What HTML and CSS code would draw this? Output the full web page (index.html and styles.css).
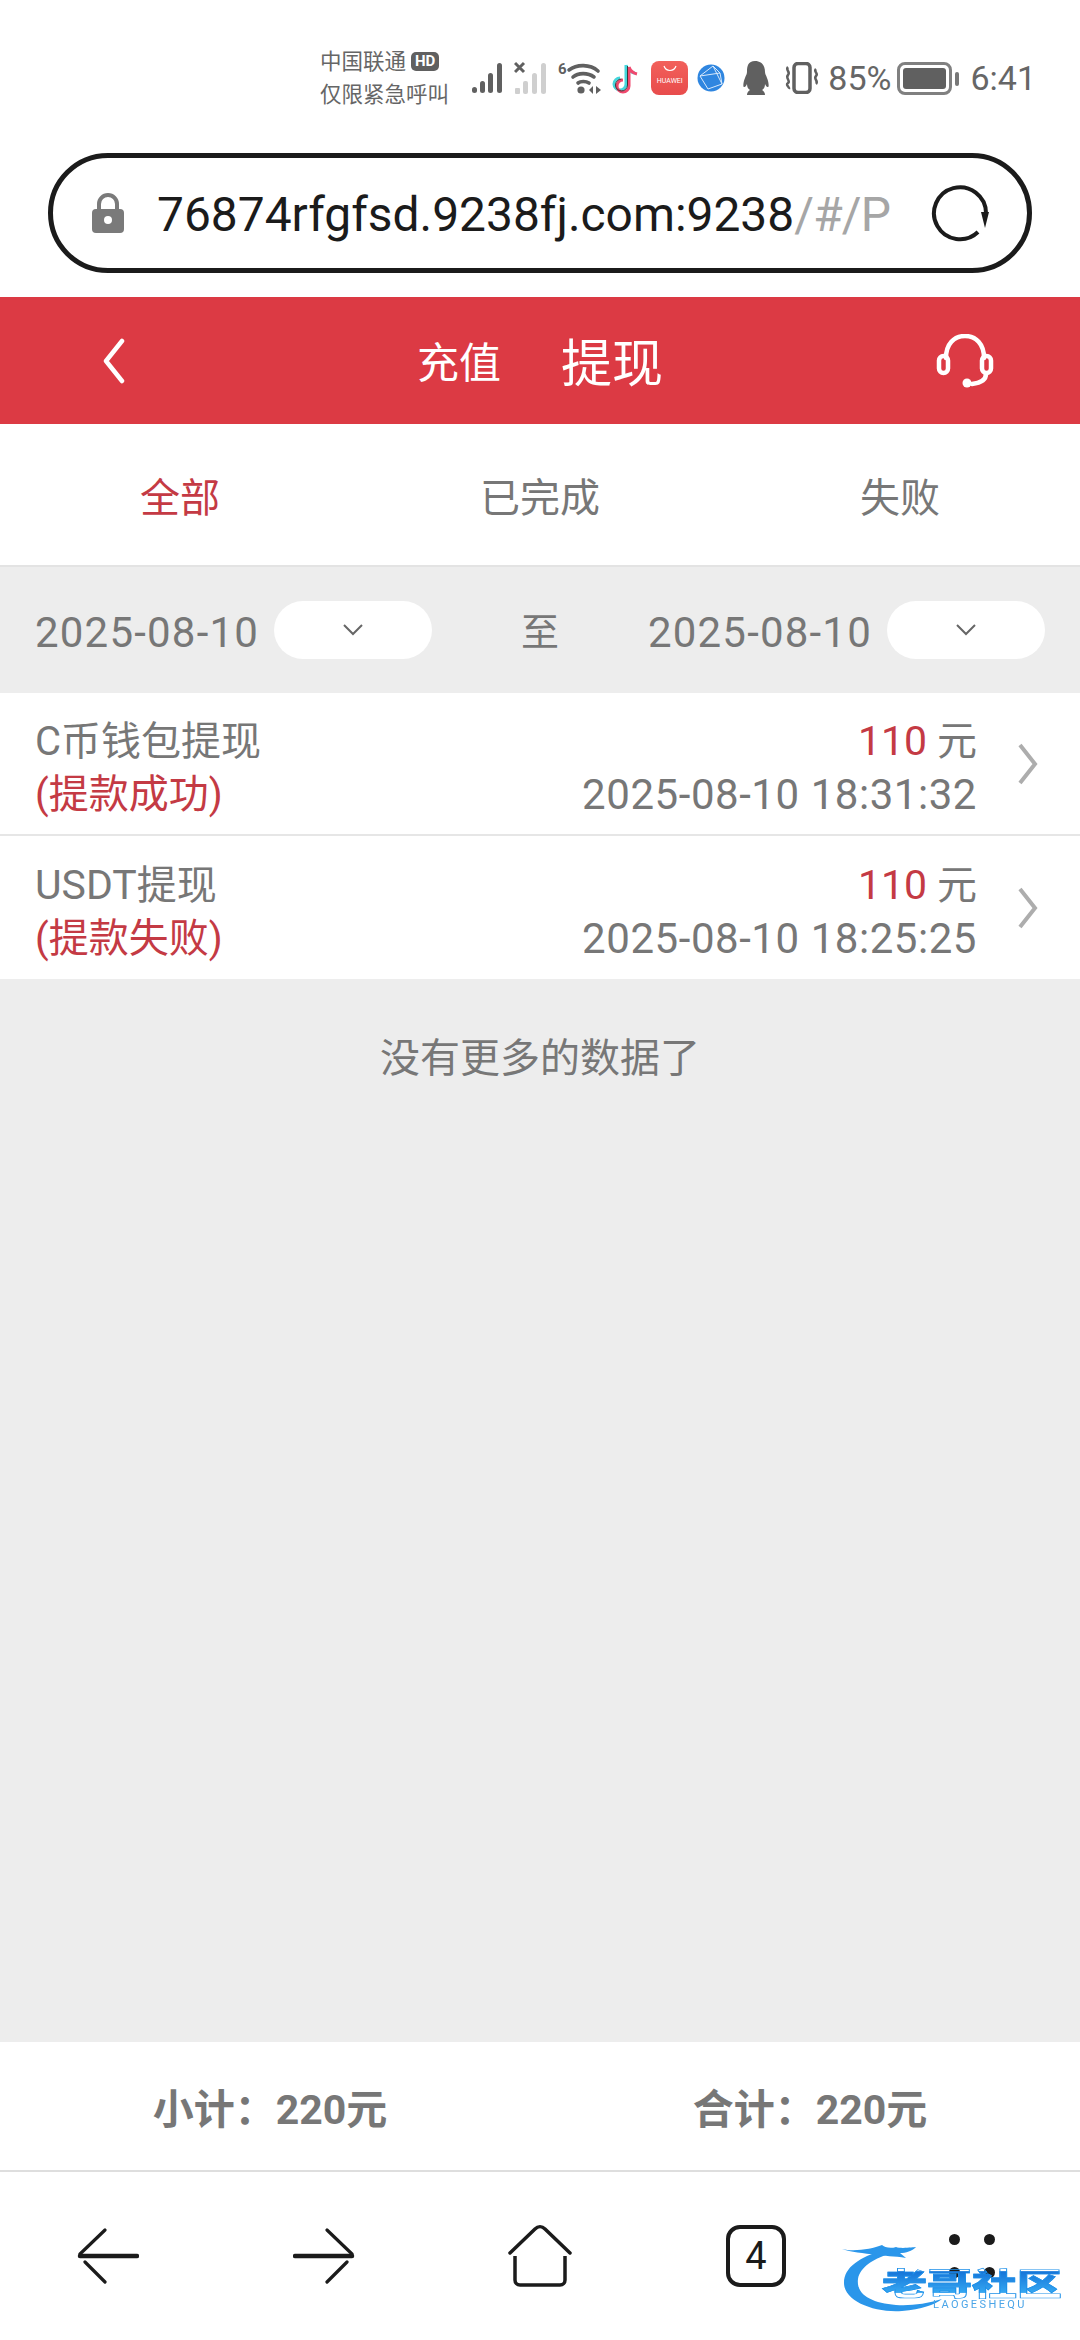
FILE: index.html
```html
<!DOCTYPE html>
<html lang="zh">
<head>
<meta charset="utf-8">
<title>提现</title>
<link rel="stylesheet" href="styles.css">
</head>
<body>
<div class="page">
  <div class="status">
    <div class="carrier">
      <div class="carrier-line"><span>中国联通</span><span class="hd">HD</span></div>
      <div class="carrier-line">仅限紧急呼叫</div>
    </div>
    <div class="status-icons">
      <svg class="si" width="34" height="32" viewBox="0 0 34 32"><g fill="#606060"><rect x="0" y="25" width="5" height="6" rx="2.5"/><rect x="8" y="19" width="5" height="12" rx="2.5"/><rect x="16" y="11" width="5" height="20" rx="2.5"/><rect x="25" y="1" width="5" height="30" rx="2.5"/></g></svg>
      <svg class="si" width="34" height="34" viewBox="0 0 34 34"><path d="M1 2l9 9M10 2l-9 9" stroke="#606060" stroke-width="3" fill="none"/><g fill="#cfcfcf"><rect x="1" y="27" width="5" height="6" rx="1"/><rect x="9" y="20" width="5" height="13" rx="2"/><rect x="18" y="12" width="5" height="21" rx="2.5"/><rect x="27" y="2" width="5" height="31" rx="2.5"/></g></svg>
      <svg class="si wifi" width="46" height="34" viewBox="0 0 46 34"><text x="0" y="13" class="six">6</text><g fill="none" stroke="#606060" stroke-width="3.600" stroke-linecap="round"><path d="M11 9c8-6 21-6 29 1"/><path d="M15 16c5-4.500 15-4.500 21 0"/><path d="M20 22c2.500-2 8-2 11 0"/></g><circle cx="23" cy="29" r="3.600" fill="#606060"/><path d="M35 25l-4 4 4 4zM38 25l5 4-5 4z" fill="#606060"/></svg>
      <svg class="si" width="28" height="32" viewBox="0 0 28 32"><g fill="none"><path d="M14 3v19a6 6 0 1 1-6-6M14 3c1 4 5 8 9 8" stroke="#44d6dc" stroke-width="3"/><path d="M17 5v19a6 6 0 1 1-6-6M17 5c1 3 4 6 8 7" stroke="#f0486e" stroke-width="3"/><path d="M15.500 4v19a6 6 0 1 1-6-6" stroke="#3a3a3a" stroke-width="1"/></g></svg>
      <div class="huawei"><svg width="14" height="7" viewBox="0 0 14 7"><path d="M1 1c2 6 10 6 12 0" fill="none" stroke="#fff" stroke-width="1.200"/></svg><span class="huawei-text">HUAWEI</span></div>
      <svg class="si" width="28" height="28" viewBox="0 0 28 28"><circle cx="14" cy="14" r="13.500" fill="#2f86e0"/><path d="M16 2L3 12l8 13 14-5zM3 12l20-3 2 11M16 2l7 7" fill="none" stroke="#d8e9fb" stroke-width="1"/></svg>
      <svg class="si qq" width="30" height="34" viewBox="0 0 30 34"><path d="M15 0c7 0 10 5 10 11 0 2 1 3 2 6 2 5 2 9 1 9-1 .5-2-1-3-3 0 3-1 5-3 6 2 1 3 3 3 5H7c0-2 1-4 3-5-2-1-3-3-3-6-1 2-2 3.500-3 3-1 0-1-4 1-9 1-3 2-4 2-6C7 5 8 0 15 0z" fill="#606060"/></svg>
      <svg class="si" width="36" height="32" viewBox="0 0 36 32"><rect x="10" y="1.500" width="16" height="29" rx="4" fill="none" stroke="#606060" stroke-width="3.500"/><g fill="none" stroke="#606060" stroke-width="2.500"><path d="M4 5c-3 3 3 5 0 8s3 6 0 8 2 4 1 6"/><path d="M32 7c-3 3 3 4 0 7s3 5 0 8"/></g></svg>
      <span class="percent">85%</span>
      <div class="battery"><div class="battery-body"><div class="battery-fill"></div></div><div class="battery-tip"></div></div>
      <span class="clock">6:41</span>
    </div>
  </div>

  <div class="url-wrap">
    <div class="url">
      <svg class="lock" width="32" height="40" viewBox="0 0 32 40"><path d="M7 18v-7a9 9 0 0 1 18 0v7" fill="none" stroke="#7a7a7a" stroke-width="4"/><rect x="0" y="16" width="32" height="24" rx="4" fill="#7a7a7a"/><circle cx="16" cy="27" r="4" fill="#fff"/></svg>
      <div class="url-text">76874rfgfsd.9238fj.com:9238<span class="url-dim">/#/P</span></div>
      <svg class="reload" width="58" height="60" viewBox="0 0 58 60"><path d="M47 49A26 26 0 1 1 55 30" fill="none" stroke="#1b1b1b" stroke-width="4"/><path d="M50 29h8l-4 16z" fill="#1b1b1b"/></svg>
    </div>
  </div>

  <header class="bar">
    <svg class="back" width="24" height="46" viewBox="0 0 24 46"><path d="M20 3L4 23l16 20" fill="none" stroke="#fff" stroke-width="4.500" stroke-linecap="round" stroke-linejoin="round"/></svg>
    <div class="bar-title"><span class="bar-sub">充值</span><span class="bar-main">提现</span></div>
    <svg class="headset" width="58" height="54" viewBox="0 0 58 54"><g fill="none" stroke="#fff" stroke-width="4.500" stroke-linecap="round"><path d="M10 24C10 10 18 2 29 2s19 8 19 22"/><rect x="3" y="22" width="9" height="17" rx="4.500"/><rect x="46" y="22" width="9" height="17" rx="4.500"/><path d="M50 40c0 6-6 9-14 10"/></g><circle cx="31" cy="49" r="4.500" fill="#fff"/></svg>
  </header>

  <nav class="tabs">
    <div class="tab tab-on">全部</div>
    <div class="tab">已完成</div>
    <div class="tab">失败</div>
  </nav>

  <div class="filter">
    <div class="date-group">
      <span class="date">2025-08-10</span>
      <div class="pill"><svg width="20" height="12" viewBox="0 0 20 12"><path d="M1 1l9 9 9-9" fill="none" stroke="#666" stroke-width="2"/></svg></div>
    </div>
    <span class="to">至</span>
    <div class="date-group">
      <span class="date">2025-08-10</span>
      <div class="pill"><svg width="20" height="12" viewBox="0 0 20 12"><path d="M1 1l9 9 9-9" fill="none" stroke="#666" stroke-width="2"/></svg></div>
    </div>
  </div>

  <div class="list">
    <div class="row">
      <div class="row-left"><div class="row-line">C币钱包提现</div><div class="row-line red">(提款成功)</div></div>
      <div class="row-right"><div class="row-line"><span class="red amount">110</span> 元</div><div class="row-line num">2025-08-10 18:31:32</div></div>
      <svg class="chev" width="22" height="42" viewBox="0 0 22 42"><path d="M3 2l15 19L3 40" fill="none" stroke="#adadad" stroke-width="4"/></svg>
    </div>
    <div class="row">
      <div class="row-left"><div class="row-line"><span class="amount">USDT</span>提现</div><div class="row-line red">(提款失败)</div></div>
      <div class="row-right"><div class="row-line"><span class="red amount">110</span> 元</div><div class="row-line num">2025-08-10 18:25:25</div></div>
      <svg class="chev" width="22" height="42" viewBox="0 0 22 42"><path d="M3 2l15 19L3 40" fill="none" stroke="#adadad" stroke-width="4"/></svg>
    </div>
  </div>

  <main class="body">
    <div class="more">没有更多的数据了</div>
  </main>

  <div class="totals">
    <div class="total">小计：220元</div>
    <div class="total">合计：220元</div>
  </div>

  <footer class="nav">
    <div class="nav-item"><svg width="62" height="56" viewBox="0 0 62 56"><path d="M28 2L3 26M8 34l20 20" fill="none" stroke="#1b1b1b" stroke-width="3.200" stroke-linecap="round"/><path d="M3 28h57" stroke="#1b1b1b" stroke-width="4.500" stroke-linecap="round"/></svg></div>
    <div class="nav-item"><svg width="62" height="56" viewBox="0 0 62 56"><path d="M34 2l25 24M54 34L34 54" fill="none" stroke="#1b1b1b" stroke-width="3.200" stroke-linecap="round"/><path d="M2 28h57" stroke="#1b1b1b" stroke-width="4.500" stroke-linecap="round"/></svg></div>
    <div class="nav-item"><svg width="64" height="62" viewBox="0 0 64 62"><path d="M2 28L27 4c3-3 7-3 10 0l25 24" fill="none" stroke="#1b1b1b" stroke-width="3.500" stroke-linecap="round"/><path d="M7 31v24c0 3 2 5 5 5h40c3 0 5-2 5-5V31" fill="none" stroke="#1b1b1b" stroke-width="3.500"/></svg></div>
    <div class="nav-item"><div class="tab-count">4</div></div>
    <div class="nav-item"><div class="dots"><i></i><i></i><i></i><i></i></div></div>
    <div class="logo">
      <svg class="logo-ring" width="120" height="70" viewBox="0 0 120 70"><path d="M42 5C18 12 2 22 2 38c0 18 30 30 58 28 20-2 32-6 40-12-16 5-32 7-46 6C30 58 14 50 16 34 18 22 32 14 44 10z" fill="#2a96ea"/><path d="M0 4c12 3 30 0 40-4 2 2 8 4 14 2 5 2 18 0 20 0-4 4-10 6-16 6 2 2 4 3 6 5-12-2-22-2-30-3C22 8 8 7 0 4z" fill="#2a96ea"/></svg>
      <div class="logo-cn">老哥社区</div>
      <div class="logo-en">LAOGESHEQU</div>
    </div>
  </footer>
</div>
</body>
</html>
```

FILE: styles.css
```css
* { box-sizing: border-box; }
html, body { margin: 0; padding: 0; }
body { font-family: "Roboto", "Noto Sans CJK SC", sans-serif; color: #777; background: #fff; }
.page { width: 1080px; height: 2340px; display: flex; flex-direction: column; overflow: hidden; }

.status { height: 153px; padding: 3px 44px 0 320px; display: flex; align-items: center; justify-content: space-between; }
.carrier { display: flex; flex-direction: column; gap: 4px; font-size: 21.5px; line-height: 29px; color: #666; }
.carrier-line { display: flex; align-items: center; gap: 5px; white-space: nowrap; }
.hd { background: #606060; color: #fff; font-size: 15px; font-weight: 700; line-height: 19px; padding: 0 4px; border-radius: 5px; font-family: "Roboto", sans-serif; }
.status-icons { display: flex; align-items: center; gap: 8px; }
.si { display: block; }
.wifi { margin-left: 2px; }
.six { font: 700 15px "Roboto", sans-serif; fill: #606060; }
.huawei { width: 37px; height: 34px; border-radius: 8px; background: linear-gradient(#f2605a, #e84c4c); display: flex; flex-direction: column; align-items: center; color: #fff; padding-top: 4px; margin: 0 1px 0 3px; }
.huawei svg { display: block; }
.huawei-text { font-size: 7px; line-height: 10px; margin-top: 4px; font-family: "Roboto", sans-serif; }
.qq { margin: 0 6px 0 7px; }
.percent, .clock { font-size: 34px; color: #666; line-height: 40px; }
.battery { display: flex; align-items: center; gap: 3px; margin: 0 3px -1px -2px; }
.battery-body { width: 55px; height: 33px; border: 3px solid #808080; border-radius: 8px; padding: 3px; }
.battery-fill { width: 100%; height: 100%; background: #606060; border-radius: 3px; }
.battery-tip { width: 4px; height: 14px; background: #777; border-radius: 2px; }

.url-wrap { height: 144px; padding: 0 48px; }
.url { height: 120px; border: 5px solid #1b1b1b; border-radius: 60px; display: flex; align-items: center; padding: 0 39px; }
.lock { flex: none; margin-right: 33px; }
.url-text { flex: 1; font-size: 47.9px; color: #1b1b1b; white-space: nowrap; overflow: hidden; padding-top: 4px; }
.url-dim { color: #a6a6a6; letter-spacing: -.8px; }
.reload { flex: none; margin-left: 11px; margin-right: -1px; }

.bar { height: 127px; background: #dc3a44; color: #fff; display: flex; align-items: center; justify-content: space-between; padding: 0 86px 0 102px; }
.bar-title { display: flex; align-items: center; gap: 60px; margin-left: 18px; margin-top: -2px; }
.bar-sub { font-size: 42px; }
.bar-main { font-size: 51px; }
.tabs { height: 143px; display: flex; border-bottom: 2px solid #e3e3e3; }
.tab { flex: 1; display: flex; align-items: center; justify-content: center; font-size: 40px; color: #777; }
.tab-on { color: #c43a44; }

.filter { height: 126px; background: #ededed; display: flex; align-items: center; justify-content: space-between; padding: 0 35px; }
.date-group { display: flex; align-items: center; gap: 15px; }
.date { font-size: 42px; letter-spacing: 1.2px; color: #777; padding-top: 5px; }
.to { font-size: 38px; color: #777; margin-top: -4px; }
.pill { width: 158px; height: 58px; background: #fff; border-radius: 29px; display: flex; align-items: center; justify-content: center; }

.list { background: #fff; }
.row { height: 143px; display: flex; align-items: center; padding: 0 41px 0 35px; border-bottom: 2px solid #e6e6e6; }
.row:last-child { border-bottom: 0; }
.row-left { flex: 1; padding-top: 8px; }
.row-right { text-align: right; padding-top: 8px; }
.row-line { font-size: 40px; line-height: 53px; color: #777; white-space: nowrap; }
.num { font-size: 42px; letter-spacing: .55px; }
.amount { font-size: 41px; }
.red { color: #c43a44; }
.row-line.red { color: #c43a44; }
.chev { margin-left: 40px; display: block; }

.body { flex: 1; background: #ededed; padding-top: 53px; }
.more { font-size: 40px; line-height: 53px; text-align: center; color: #777; }

.totals { height: 130px; display: flex; border-bottom: 2px solid #dedede; }
.total { flex: 1; display: flex; align-items: center; justify-content: center; font-size: 41px; font-weight: 700; color: #777; }

.nav { height: 168px; display: flex; position: relative; }
.nav-item { flex: 1; display: flex; align-items: center; justify-content: center; }
.tab-count { width: 60px; height: 62px; border: 4px solid #1b1b1b; border-radius: 14px; display: flex; align-items: center; justify-content: center; font-size: 38px; color: #1b1b1b; }
.dots { display: grid; grid-template-columns: 11px 11px; gap: 22px 24px; }
.dots i { width: 11px; height: 11px; border-radius: 50%; background: #1b1b1b; display: block; }
.logo { position: absolute; left: 842px; top: 73px; width: 222px; height: 70px; filter: blur(.6px); }
.logo-ring { position: absolute; left: 0; top: 0; }
.logo-cn { position: absolute; left: 40px; top: 21px; font-size: 45px; line-height: 32px; font-weight: 900; white-space: nowrap; font-family: "Noto Sans CJK SC", sans-serif; transform: scaleY(.68); background: linear-gradient(#1573d8, #35a8f2); -webkit-background-clip: text; background-clip: text; color: transparent; -webkit-text-stroke: 1px #1e90e8; }
.logo-en { position: absolute; left: 91px; top: 54px; font-size: 11px; line-height: 12px; letter-spacing: 2.4px; color: #4aa5e8; white-space: nowrap; font-family: "Roboto", sans-serif; }
```
